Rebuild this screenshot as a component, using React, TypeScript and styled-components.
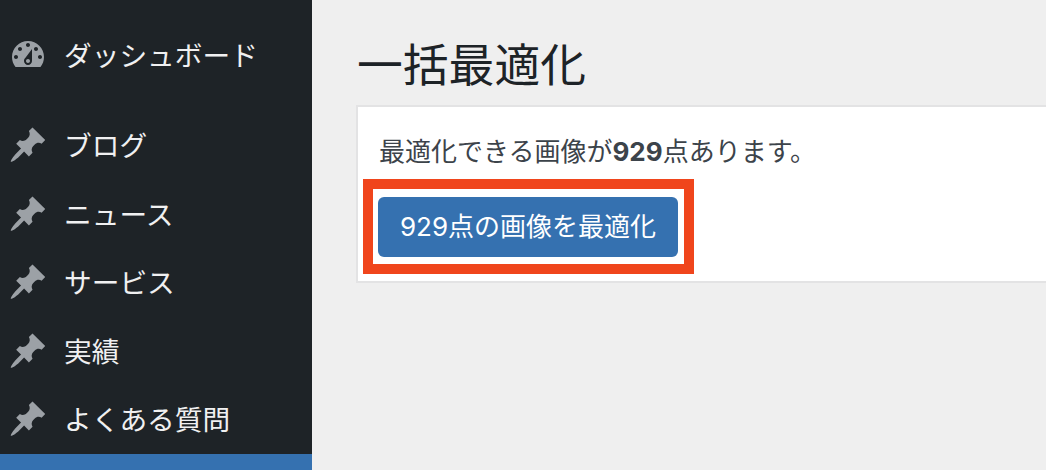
import React from 'react';
import styled, { createGlobalStyle } from 'styled-components';

const GlobalStyle = createGlobalStyle`
    html, body {
        margin: 0;
        padding: 0;
        height: 100%;
        overflow: hidden;
    }
    body {
        font-family: Inter, "Noto Sans CJK JP", sans-serif;
    }
`;

const dashboardPath =
    'M3.76 16h12.48c1.1-1.37 1.76-3.11 1.76-5 0-4.42-3.58-8-8-8s-8 3.58-8 8c0 1.89.66 3.63 1.76 5zM10 4c.55 0 1 .45 1 1s-.45 1-1 1-1-.45-1-1 .45-1 1-1zM6 6c.55 0 1 .45 1 1s-.45 1-1 1-1-.45-1-1 .45-1 1-1zm8 0c.55 0 1 .45 1 1s-.45 1-1 1-1-.45-1-1 .45-1 1-1zm-5.37 5.55L12 7v6c0 1.1-.9 2-2 2s-2-.9-2-2c0-.57.24-1.08.63-1.45zM4 10c.55 0 1 .45 1 1s-.45 1-1 1-1-.45-1-1 .45-1 1-1zm12 0c.55 0 1 .45 1 1s-.45 1-1 1-1-.45-1-1 .45-1 1-1zm-5 3c0-.55-.45-1-1-1s-1 .45-1 1 .45 1 1 1 1-.45 1-1z';
const pinPath =
    'M10.44 3.02l1.82-1.82 6.36 6.35-1.83 1.82c-1.05-.68-2.48-.57-3.41.36l-.75.75c-.92.93-1.04 2.35-.35 3.41l-1.83 1.82-2.41-2.41-2.8 2.79c-.42.42-3.38 2.71-3.8 2.29s1.86-3.39 2.28-3.81l2.79-2.79L4.1 9.36l1.83-1.82c1.05.69 2.48.57 3.4-.36l.75-.75c.93-.92 1.05-2.35.36-3.41z';

const postTypes = ['ブログ', 'ニュース', 'サービス', '実績', 'よくある質問'];

const MenuIcon: React.FC<{ path: string }> = ({ path }) => (
    <IconSvg viewBox="0 0 20 20" aria-hidden="true">
        <path d={path} fillRule="evenodd" />
    </IconSvg>
);

const App: React.FC = () => {
    return (
        <Page>
            <GlobalStyle />
            <Sidebar>
                <MenuItem $first>
                    <MenuIcon path={dashboardPath} />
                    <MenuLabel>ダッシュボード</MenuLabel>
                </MenuItem>
                <Separator />
                {postTypes.map((name) => (
                    <MenuItem key={name}>
                        <MenuIcon path={pinPath} />
                        <MenuLabel>{name}</MenuLabel>
                    </MenuItem>
                ))}
                <ActiveItem />
            </Sidebar>
            <Main>
                <Title>一括最適化</Title>
                <Card>
                    <Message>
                        最適化できる画像が<strong>929</strong>点あります。
                    </Message>
                    <Highlight>
                        <OptimizeButton>929点の画像を最適化</OptimizeButton>
                    </Highlight>
                </Card>
            </Main>
        </Page>
    );
};

const Page = styled.div`
    display: flex;
    width: 1046px;
    height: 470px;
    overflow: hidden;
    background-color: #efefef;
`;

const Sidebar = styled.nav`
    display: flex;
    flex-direction: column;
    flex: 0 0 312px;
    padding-top: 21px;
    box-sizing: border-box;
    background-color: #1e2327;
    overflow: hidden;
`;

const MenuItem = styled.div<{ $first?: boolean }>`
    display: flex;
    flex: 0 0 ${(p) => (p.$first ? '68px' : '68.5px')};
    align-items: center;
    gap: 16px;
    padding-left: 8px;
`;

const IconSvg = styled.svg`
    flex: 0 0 40px;
    width: 40px;
    height: 40px;
    fill: #9ca1a6;
`;

const MenuLabel = styled.span`
    margin-top: 4px;
    color: #f0f0f1;
    font-size: 27.7px;
    line-height: 1;
`;

const Separator = styled.div`
    flex: 0 0 22px;
`;

const ActiveItem = styled.div`
    flex: 0 0 68px;
    background-color: #3571b0;
`;

const Main = styled.main`
    flex: 1;
    min-width: 0;
    padding: 33px 0 0 44px;
`;

const Title = styled.h1`
    margin: 0 0 6px 1px;
    color: #1d2327;
    font-size: 45.8px;
    font-weight: 400;
    line-height: 66px;
`;

const Card = styled.section`
    height: 178px;
    box-sizing: border-box;
    padding: 21px 0 0 5px;
    background-color: #fff;
    border: 2px solid #e3e3e4;
    border-right: none;
`;

const Message = styled.p`
    margin: 0 0 3px 16px;
    color: #3c434a;
    font-size: 26px;
    line-height: 48px;

    strong {
        font-weight: 700;
    }
`;

const Highlight = styled.div`
    display: inline-block;
    padding: 8px 6px 7px 5px;
    background-color: #fff;
    border: 10px solid #f0451c;
`;

const OptimizeButton = styled.button`
    display: block;
    width: 300px;
    height: 60px;
    padding: 0;
    color: #fff;
    font-family: inherit;
    font-size: 26px;
    line-height: 1;
    background-color: #3571b0;
    border: none;
    border-radius: 6px;
`;

export default App;
